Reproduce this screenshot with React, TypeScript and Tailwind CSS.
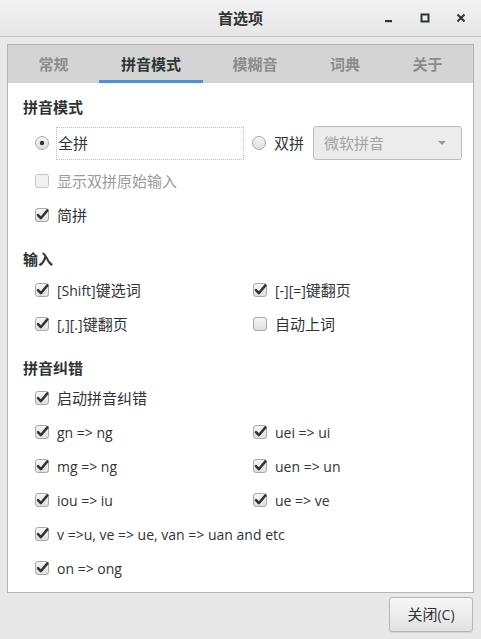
import React from "react";

const font = { fontFamily: '"Open Sans", "Noto Sans CJK SC", sans-serif' };

// CJK glyphs in the original run a touch larger than the Latin ones
function Txt({ s }: { s: string }) {
  const parts = s.split(/([\u4e00-\u9fff]+)/).filter(Boolean);
  return (
    <>
      {parts.map((p, i) =>
        /[\u4e00-\u9fff]/.test(p) ? (
          <span key={i} className="text-[15px]">
            {p}
          </span>
        ) : (
          <span key={i}>{p}</span>
        )
      )}
    </>
  );
}

function CheckBox({ checked, disabled }: { checked?: boolean; disabled?: boolean }) {
  return (
    <svg width="16" height="16" viewBox="0 0 16 16" className="shrink-0">
      <defs>
        <linearGradient id="cbg" x1="0" y1="0" x2="0" y2="1">
          <stop offset="0" stopColor="#f7f7f7" />
          <stop offset="1" stopColor="#dedede" />
        </linearGradient>
      </defs>
      <rect
        x="1.5"
        y="1.5"
        width="13"
        height="13"
        rx="2.5"
        fill={disabled ? "#f2f2f2" : "url(#cbg)"}
        stroke={disabled ? "#c4c4c4" : "#a9a9a9"}
      />
      {checked && (
        <path d="M4 8.2 L6.8 11.2 L13.4 3.4" fill="none" stroke="#2e3436" strokeWidth="2.5" strokeLinecap="round" strokeLinejoin="round" />
      )}
    </svg>
  );
}

function Radio({ checked }: { checked?: boolean }) {
  return (
    <svg width="16" height="16" viewBox="0 0 16 16" className="shrink-0">
      <defs>
        <linearGradient id="rbg" x1="0" y1="0" x2="0" y2="1">
          <stop offset="0" stopColor="#f7f7f7" />
          <stop offset="1" stopColor="#dcdcdc" />
        </linearGradient>
      </defs>
      <circle cx="8" cy="8" r="6.5" fill="url(#rbg)" stroke="#a9a9a9" />
      {checked && <circle cx="8" cy="8" r="2.2" fill="#2e3436" />}
    </svg>
  );
}

function Check({ label, checked, disabled, w }: { label: string; checked?: boolean; disabled?: boolean; w?: string }) {
  return (
    <div className={`flex items-center gap-[7px] h-[34px] ${w ?? ""}`}>
      <CheckBox checked={checked} disabled={disabled} />
      <span className={disabled ? "text-[#9a9a9a]" : "text-[#2e3436]"}>
        <Txt s={label} />
      </span>
    </div>
  );
}

function Heading({ text }: { text: string }) {
  return <div className="h-6 flex items-center font-bold text-[15px] text-[#2e3436]">{text}</div>;
}

const tabs = [
  { name: "常规", w: "w-[91px]" },
  { name: "拼音模式", w: "w-[104px]", active: true },
  { name: "模糊音", w: "w-[104px]" },
  { name: "词典", w: "w-[76px]" },
  { name: "关于", w: "w-[89px]" },
];

export default function App() {
  return (
    <div className="w-[481px] h-[639px] bg-[#e8e8e8] flex flex-col text-[14px] overflow-hidden" style={font}>
      {/* title bar */}
      <div className="h-[37px] shrink-0 flex items-center relative bg-gradient-to-b from-[#f2f2f2] to-[#e6e6e6] border-b border-[#c6c6c6]">
        <div className="flex-1 text-center font-bold text-[15px] text-[#2e3436]">首选项</div>
        <div className="absolute right-0 top-0 h-full flex items-center">
          <div className="w-[36px] flex justify-center">
            <svg width="10" height="10" viewBox="0 0 10 10">
              <rect x="1" y="7" width="7" height="2.2" fill="#2e3436" />
            </svg>
          </div>
          <div className="w-[36px] flex justify-center">
            <svg width="10" height="10" viewBox="0 0 10 10">
              <rect x="1.5" y="1.5" width="7" height="7" fill="none" stroke="#2e3436" strokeWidth="2" />
            </svg>
          </div>
          <div className="w-[36px] flex justify-center mr-[2px]">
            <svg width="10" height="10" viewBox="0 0 10 10">
              <path d="M1.5 1.5 L8.5 8.5 M8.5 1.5 L1.5 8.5" stroke="#2e3436" strokeWidth="2" />
            </svg>
          </div>
        </div>
      </div>

      {/* notebook */}
      <div className="mx-[7px] mt-[7px] h-[549px] border border-[#b4b4b4] flex flex-col bg-white">
        <div className="h-[38px] shrink-0 flex bg-[#d4d4d4]">
          {tabs.map((t) => (
            <div
              key={t.name}
              className={`${t.w} relative flex items-center justify-center font-bold text-[15px] ${t.active ? "text-[#2e3436]" : "text-[#8c8c8c]"}`}
            >
              {t.name}
              {t.active && <div className="absolute left-0 right-0 bottom-0 h-[3px] bg-[#4a90d9]" />}
            </div>
          ))}
        </div>

        <div className="flex-1 pl-[15px] pt-[12px] flex flex-col">
          <Heading text="拼音模式" />
          <div className="pl-[11px]">
            <div className="mt-[7px] flex items-center h-[34px]">
              <Radio checked />
              <div className="ml-[6px] w-[188px] h-[33px] border border-dotted border-[#bdbdbd] flex items-center pl-[1px] text-[15px] text-[#2e3436]">
                全拼
              </div>
              <div className="ml-[7px]">
                <Radio />
              </div>
              <span className="ml-[7px] text-[15px] text-[#2e3436]">双拼</span>
              <div className="ml-[9px] w-[149px] h-[34px] rounded-[3px] border border-[#bcbcbc] bg-[#ececec] flex items-center justify-between pl-[10px] pr-[14px] text-[15px] text-[#a3a3a3]">
                <span>微软拼音</span>
                <svg width="10" height="6" viewBox="0 0 10 6">
                  <path d="M1 1 L9 1 L5 5 Z" fill="#9a9a9a" />
                </svg>
              </div>
            </div>
            <div className="mt-[4px]">
              <Check label="显示双拼原始输入" disabled />
            </div>
            <Check label="简拼" checked />
          </div>

          <div className="mt-[15px]">
            <Heading text="输入" />
          </div>
          <div className="pl-[11px] mt-[2px]">
            <div className="flex">
              <Check label="[Shift]键选词" checked w="w-[218px]" />
              <Check label="[-][=]键翻页" checked />
            </div>
            <div className="flex">
              <Check label="[,][.]键翻页" checked w="w-[218px]" />
              <Check label="自动上词" />
            </div>
          </div>

          <div className="mt-[15px]">
            <Heading text="拼音纠错" />
          </div>
          <div className="pl-[11px] mt-[1px]">
            <Check label="启动拼音纠错" checked />
            <div className="flex">
              <Check label="gn => ng" checked w="w-[218px]" />
              <Check label="uei => ui" checked />
            </div>
            <div className="flex">
              <Check label="mg => ng" checked w="w-[218px]" />
              <Check label="uen => un" checked />
            </div>
            <div className="flex">
              <Check label="iou => iu" checked w="w-[218px]" />
              <Check label="ue => ve" checked />
            </div>
            <Check label="v =>u, ve => ue, van => uan and etc" checked />
            <Check label="on => ong" checked />
          </div>
        </div>
      </div>

      {/* button row */}
      <div className="flex justify-end pr-[8px] pt-[4px]">
        <button className="w-[84px] h-[35px] rounded-[3px] border border-[#b5b5b5] bg-gradient-to-b from-[#f7f7f7] to-[#e2e2e2] text-[#2e3436] shadow-[0_1px_0_rgba(0,0,0,0.08)]">
          <Txt s="关闭(C)" />
        </button>
      </div>
    </div>
  );
}
